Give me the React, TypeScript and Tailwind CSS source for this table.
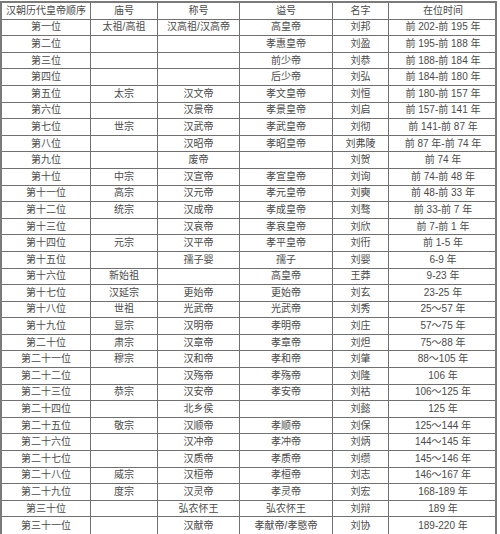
const rows: string[][] = [
  ["第一位", "太祖/高祖", "汉高祖/汉高帝", "高皇帝", "刘邦", "前 202-前 195 年"],
  ["第二位", "", "", "孝惠皇帝", "刘盈", "前 195-前 188 年"],
  ["第三位", "", "", "前少帝", "刘恭", "前 188-前 184 年"],
  ["第四位", "", "", "后少帝", "刘弘", "前 184-前 180 年"],
  ["第五位", "太宗", "汉文帝", "孝文皇帝", "刘恒", "前 180-前 157 年"],
  ["第六位", "", "汉景帝", "孝景皇帝", "刘启", "前 157-前 141 年"],
  ["第七位", "世宗", "汉武帝", "孝武皇帝", "刘彻", "前 141-前 87 年"],
  ["第八位", "", "汉昭帝", "孝昭皇帝", "刘弗陵", "前 87 年-前 74 年"],
  ["第九位", "", "废帝", "", "刘贺", "前 74 年"],
  ["第十位", "中宗", "汉宣帝", "孝宣皇帝", "刘询", "前 74-前 48 年"],
  ["第十一位", "高宗", "汉元帝", "孝元皇帝", "刘奭", "前 48-前 33 年"],
  ["第十二位", "统宗", "汉成帝", "孝成皇帝", "刘骜", "前 33-前 7 年"],
  ["第十三位", "", "汉哀帝", "孝哀皇帝", "刘欣", "前 7-前 1 年"],
  ["第十四位", "元宗", "汉平帝", "孝平皇帝", "刘衎", "前 1-5 年"],
  ["第十五位", "", "孺子婴", "孺子", "刘婴", "6-9 年"],
  ["第十六位", "新始祖", "", "高皇帝", "王莽", "9-23 年"],
  ["第十七位", "汉延宗", "更始帝", "更始帝", "刘玄", "23-25 年"],
  ["第十八位", "世祖", "光武帝", "光武帝", "刘秀", "25～57 年"],
  ["第十九位", "显宗", "汉明帝", "孝明帝", "刘庄", "57～75 年"],
  ["第二十位", "肃宗", "汉章帝", "孝章帝", "刘炟", "75～88 年"],
  ["第二十一位", "穆宗", "汉和帝", "孝和帝", "刘肇", "88～105 年"],
  ["第二十二位", "", "汉殇帝", "孝殇帝", "刘隆", "106 年"],
  ["第二十三位", "恭宗", "汉安帝", "孝安帝", "刘祜", "106～125 年"],
  ["第二十四位", "", "北乡侯", "", "刘懿", "125 年"],
  ["第二十五位", "敬宗", "汉顺帝", "孝顺帝", "刘保", "125～144 年"],
  ["第二十六位", "", "汉冲帝", "孝冲帝", "刘炳", "144～145 年"],
  ["第二十七位", "", "汉质帝", "孝质帝", "刘缵", "145～146 年"],
  ["第二十八位", "威宗", "汉桓帝", "孝桓帝", "刘志", "146～167 年"],
  ["第二十九位", "度宗", "汉灵帝", "孝灵帝", "刘宏", "168-189 年"],
  ["第三十位", "", "弘农怀王", "弘农怀王", "刘辩", "189 年"],
  ["第三十一位", "", "汉献帝", "孝献帝/孝愍帝", "刘协", "189-220 年"],
];

const head = ["汉朝历代皇帝顺序", "庙号", "称号", "谥号", "名字", "在位时间"];

function Row({ cells, last }: { cells: string[]; last?: boolean }) {
  return (
    <div
      className={
        "grid h-[16.6px] grid-cols-[89px_67px_82px_93px_56px_108px] items-center " +
        (last ? "" : "border-b border-[#707070]")
      }
    >
      {cells.map((c, i) => (
        <div
          key={i}
          className={
            "flex h-full items-center justify-center whitespace-nowrap leading-none " +
            (i < 5 ? "border-r border-[#707070]" : "")
          }
        >
          {c}
        </div>
      ))}
    </div>
  );
}

export default function App() {
  return (
    <div className="min-h-[534px] w-[500px] bg-white pt-px">
      <div className="w-[497px] border-2 border-[#7a7a7a] font-['Liberation_Sans','Noto_Sans_CJK_SC',sans-serif] text-[10px] text-[#4a4a4a]">
        <Row cells={head} />
        {rows.map((r, i) => (
          <Row key={i} cells={r} last={i === rows.length - 1} />
        ))}
      </div>
    </div>
  );
}
